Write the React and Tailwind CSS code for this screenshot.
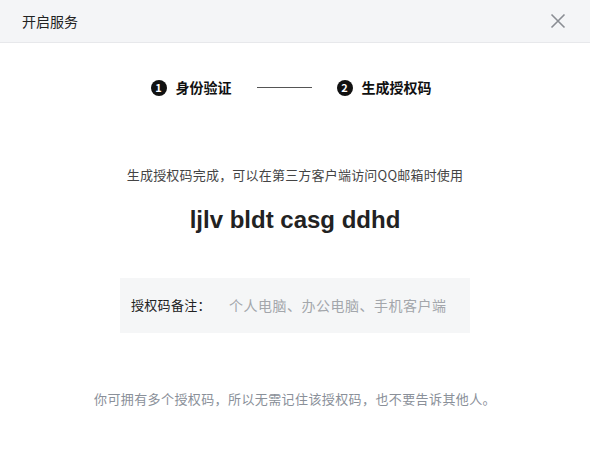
import React from "react";

const StepDot = ({ n }) => (
  <span className="w-[16px] h-[16px] rounded-full bg-[#111] text-white text-[11px] font-bold flex items-center justify-center leading-none">
    {n}
  </span>
);

const App = () => {
  return (
    <div
      className="w-[590px] h-[454px] bg-white flex flex-col"
      style={{ fontFamily: '"Noto Sans CJK SC", "Liberation Sans", sans-serif' }}
    >
      {/* header */}
      <div className="h-[43px] bg-[#f4f5f7] border-b border-[#e7e8eb] flex items-center justify-between pl-[22px] pr-[24px] shrink-0">
        <span className="text-[14px] text-[#222]">开启服务</span>
        <svg width="16" height="16" viewBox="0 0 16 16" className="text-[#8a8d93]">
          <path d="M1.5 1.5 L14.5 14.5 M14.5 1.5 L1.5 14.5" stroke="currentColor" strokeWidth="1.6" fill="none" />
        </svg>
      </div>

      {/* steps */}
      <div className="flex items-center justify-center pt-[34px] pr-[8px]">
        <div className="flex items-center gap-[9px]">
          <StepDot n="1" />
          <span className="text-[14px] font-bold text-[#111]">身份验证</span>
        </div>
        <div className="w-[55px] h-px bg-[#555] mx-[25px]" />
        <div className="flex items-center gap-[9px]">
          <StepDot n="2" />
          <span className="text-[14px] font-bold text-[#111]">生成授权码</span>
        </div>
      </div>

      {/* result */}
      <div className="flex flex-col items-center">
        <p className="mt-[67px] text-[13px] text-[#444] tracking-[0.2px]">生成授权码完成，可以在第三方客户端访问QQ邮箱时使用</p>
        <p
          className="mt-[17px] text-[24px] font-bold text-[#222]"
          style={{ fontFamily: '"Liberation Sans", sans-serif' }}
        >
          ljlv bldt casg ddhd
        </p>

        <div className="mt-[40px] w-[350px] h-[55px] bg-[#f5f6f7] flex items-center pl-[11px]">
          <span className="text-[13px] text-[#222] w-[98px] tracking-[0.3px]">授权码备注：</span>
          <span className="text-[14px] text-[#a3a6ab] tracking-[0.5px]">个人电脑、办公电脑、手机客户端</span>
        </div>

        <p className="mt-[56px] text-[13px] text-[#8a9099] tracking-[0.4px]">
          你可拥有多个授权码，所以无需记住该授权码，也不要告诉其他人。
        </p>
      </div>
    </div>
  );
};

export default App;
